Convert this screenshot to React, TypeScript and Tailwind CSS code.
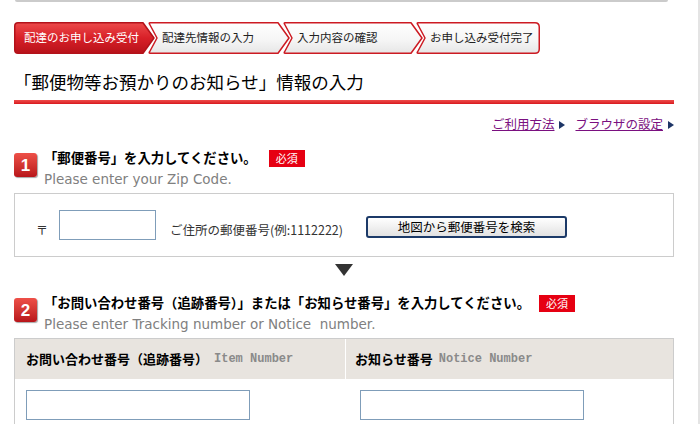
import React from "react";

const jp = "font-['Noto_Sans_CJK_JP',sans-serif]";

type StepProps = {
  label: string;
  kind: "first" | "middle" | "last";
  w: number;
  active?: boolean;
  className: string;
};

function Step({ label, kind, w, active, className }: StepProps) {
  let d = "";
  if (kind === "first") {
    d = `M4,0.75 H${w - 12} L${w - 1},16 L${w - 12},31.25 H4 Q0.75,31.25 0.75,28 V4 Q0.75,0.75 4,0.75 Z`;
  } else if (kind === "middle") {
    d = `M2,0.75 H${w - 12} L${w - 1},16 L${w - 12},31.25 H2 Q0.75,31.25 1.5,30 L9,16 L1.5,2 Q0.75,0.75 2,0.75 Z`;
  } else {
    d = `M2,0.75 H${w - 5} Q${w - 0.75},0.75 ${w - 0.75},5 V27 Q${w - 0.75},31.25 ${w - 5},31.25 H2 Q0.75,31.25 1.5,30 L9,16 L1.5,2 Q0.75,0.75 2,0.75 Z`;
  }
  const gid = active ? "stepRed" : "stepWhite";
  return (
    <div className={`relative h-[32px] flex items-center ${className}`}>
      <svg className="absolute inset-0" width={w} height={32} viewBox={`0 0 ${w} 32`}>
        <defs>
          <linearGradient id="stepRed" x1="0" y1="0" x2="0" y2="1">
            <stop offset="0" stopColor="#ec4a4a" />
            <stop offset="0.5" stopColor="#d82028" />
            <stop offset="1" stopColor="#b8121a" />
          </linearGradient>
          <linearGradient id="stepWhite" x1="0" y1="0" x2="0" y2="1">
            <stop offset="0" stopColor="#ffffff" />
            <stop offset="0.55" stopColor="#f6f6f6" />
            <stop offset="1" stopColor="#e6e6e6" />
          </linearGradient>
        </defs>
        <path d={d} fill={`url(#${gid})`} stroke={active ? "#b3121a" : "#cc1a22"} strokeWidth="1.5" strokeLinejoin="round" />
      </svg>
      <span className={`relative ${jp} text-[11.5px] leading-none ${active ? "text-white pl-[10px]" : "text-[#222] pl-[14px]"}`}>
        {label}
      </span>
    </div>
  );
}

function NumBadge({ n }: { n: string }) {
  return (
    <div className="w-[23px] h-[24px] rounded-[3px] bg-linear-to-b from-[#ee5048] to-[#b8141a] shadow-[1px_1px_1px_rgba(0,0,0,0.35)] flex items-center justify-center text-white font-bold text-[17px] font-['Liberation_Sans',sans-serif] leading-none shrink-0">
      {n}
    </div>
  );
}

function Required() {
  return (
    <span className={`${jp} bg-[#e60012] text-white text-[11px] leading-none h-[17px] w-[36px] flex items-center justify-center`}>
      必須
    </span>
  );
}

function Arrow() {
  return (
    <svg width="6" height="8" viewBox="0 0 6 8" className="ml-[5px] mt-[1px]">
      <path d="M0,0 L6,4 L0,8 Z" fill="#1d3566" />
    </svg>
  );
}

export default function App() {
  return (
    <div className="w-[700px] h-[424px] overflow-hidden bg-white border-r-2 border-[#e4e4e4]">
      <div className="ml-[15px] w-[653px] h-[2px] bg-[#cbcbcb] rounded-b-[2px]" />

      <div className="pl-[14px] w-[674px]">
        {/* steps */}
        <div className="mt-[20px] flex">
          <Step label="配達のお申し込み受付" kind="first" w={141} active className="w-[141px]" />
          <Step label="配達先情報の入力" kind="middle" w={142} className="w-[142px] -ml-[7px]" />
          <Step label="入力内容の確認" kind="middle" w={140} className="w-[140px] -ml-[7px]" />
          <Step label="お申し込み受付完了" kind="last" w={124} className="w-[124px] -ml-[7px]" />
        </div>

        <h1 className={`${jp} mt-[16px] text-[17.5px] leading-[24px] text-black font-normal`}>
          「郵便物等お預かりのお知らせ」情報の入力
        </h1>
        <div className="mt-[6px] h-[4px] bg-linear-to-b from-[#ee4a4a] to-[#d8151c]" />

        <div className={`${jp} mt-[12px] flex justify-end items-center text-[12.5px] leading-[16px] text-[#7a1080]`}>
          <a className="underline">ご利用方法</a>
          <Arrow />
          <a className="underline ml-[10px]">ブラウザの設定</a>
          <Arrow />
        </div>

        {/* section 1 */}
        <div className="mt-[17px] flex">
          <div className="mt-[4px]">
            <NumBadge n="1" />
          </div>
          <div className="ml-[7px]">
            <div className="flex items-center h-[18px]">
              <span className={`${jp} text-[13.35px] font-bold text-black`}>「郵便番号」を入力してください。</span>
              <span className="ml-[12px]">
                <Required />
              </span>
            </div>
            <div className="mt-[4px] font-['DejaVu_Sans',sans-serif] text-[13.5px] leading-[16px] text-[#808080]">
              Please enter your Zip Code.
            </div>
          </div>
        </div>

        <div className="mt-[6px] border border-[#cccccc] py-[16px] flex items-end">
          <span className={`${jp} ml-[21px] mb-[2px] text-[12px] leading-[16px] text-[#333]`}>〒</span>
          <input className="ml-[11px] w-[97px] h-[30px] border border-[#7f9db9] bg-white outline-none" />
          <span className={`${jp} ml-[14px] mb-[2px] text-[12.5px] leading-[16px] text-[#333]`}>
            ご住所の郵便番号(例:1112222)
          </span>
          <button className={`${jp} ml-[23px] mb-[2px] w-[201px] h-[22px] rounded-[3px] border-2 border-[#1c3a68] bg-linear-to-b from-white to-[#e2e2e2] text-[12.5px] leading-none text-black`}>
            地図から郵便番号を検索
          </button>
        </div>

        <div className="mt-[7px] flex justify-center pr-[1px]">
          <svg width="18" height="12" viewBox="0 0 18 12">
            <path d="M0,0 H18 L9,12 Z" fill="#333333" />
          </svg>
        </div>

        {/* section 2 */}
        <div className="mt-[18px] flex">
          <div className="mt-[4px]">
            <NumBadge n="2" />
          </div>
          <div className="ml-[7px]">
            <div className="flex items-center h-[18px]">
              <span className={`${jp} text-[13.35px] font-bold text-black`}>
                「お問い合わせ番号（追跡番号）」または「お知らせ番号」を入力してください。
              </span>
              <span className="ml-[9px]">
                <Required />
              </span>
            </div>
            <div className="mt-[4px] font-['DejaVu_Sans',sans-serif] text-[13.5px] leading-[16px] text-[#808080] whitespace-pre">
              Please enter Tracking number or Notice  number.
            </div>
          </div>
        </div>

        <div className="mt-[6px] border border-[#cccccc]">
          <div className="grid grid-cols-[330px_1fr] gap-px bg-white h-[40px]">
            <div className="bg-[#e8e4df] flex items-center pl-[11px]">
              <span className={`${jp} text-[13px] font-bold text-black`}>お問い合わせ番号（追跡番号）</span>
              <span className="ml-[6px] font-['Liberation_Mono',monospace] font-bold text-[12px] text-[#8a8a8a]">
                Item Number
              </span>
            </div>
            <div className="bg-[#e8e4df] flex items-center pl-[9px]">
              <span className={`${jp} text-[13px] font-bold text-black`}>お知らせ番号</span>
              <span className="ml-[6px] font-['Liberation_Mono',monospace] font-bold text-[12px] text-[#8a8a8a]">
                Notice Number
              </span>
            </div>
          </div>
          <div className="grid grid-cols-[330px_1fr] pt-[11px] pb-[12px]">
            <div className="pl-[11px]">
              <input className="w-[224px] h-[30px] border border-[#7f9db9] bg-white outline-none" />
            </div>
            <div className="pl-[15px]">
              <input className="w-[224px] h-[30px] border border-[#7f9db9] bg-white outline-none" />
            </div>
          </div>
        </div>
      </div>
    </div>
  );
}
